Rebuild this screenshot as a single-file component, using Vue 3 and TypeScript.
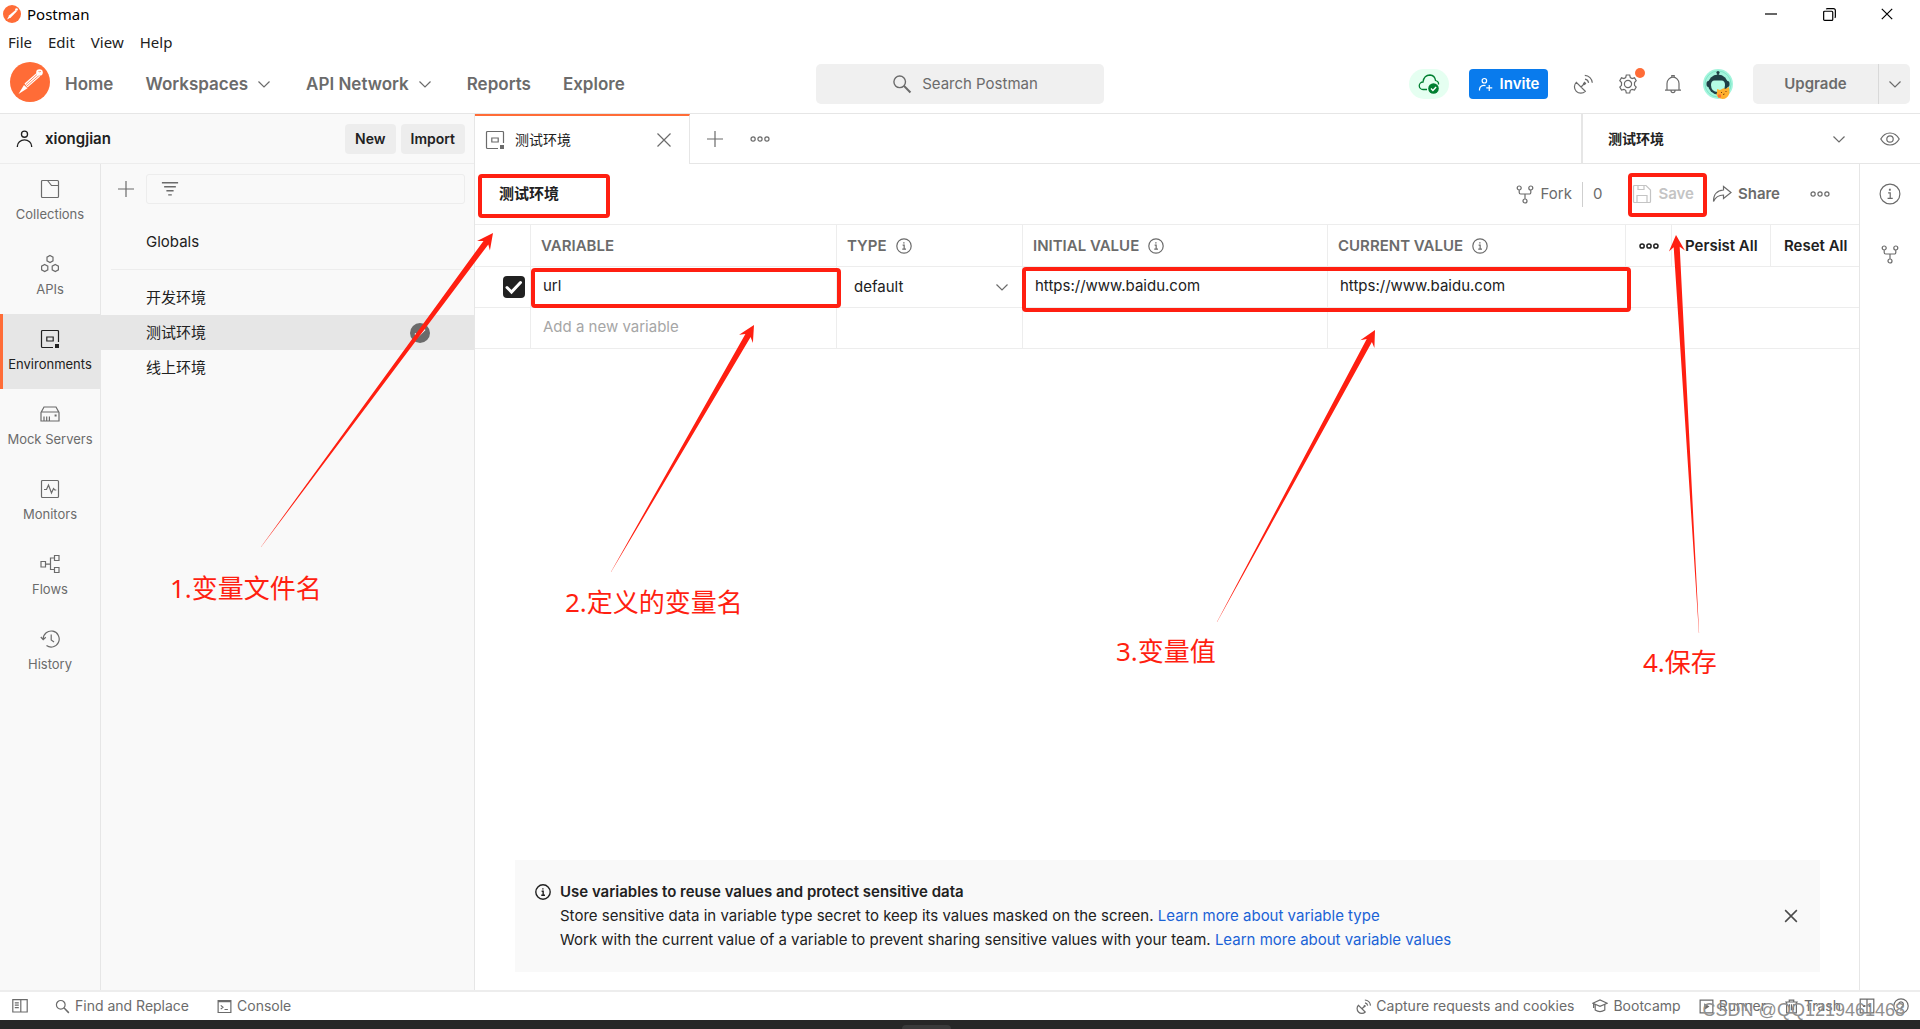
<script setup lang="ts">
import { h, ref } from 'vue'

interface Glyph {
  line?: string
  fill?: string
}

const glyphs: Record<string, Glyph> = {
  chevron: { line: 'M4.5 7.5 10 13l5.500-5.500' },
  close: { line: 'M3.500 3.500l13 13M16.500 3.500l-13 13' },
  plus: { line: 'M10 2v16M2 10h16' },
  dots: {
    line: 'M5.200 10a2.100 2.100 0 1 1-4.200 0a2.100 2.100 0 1 1 4.200 0zM12.100 10a2.100 2.100 0 1 1-4.200 0a2.100 2.100 0 1 1 4.200 0zM19 10a2.100 2.100 0 1 1-4.200 0a2.100 2.100 0 1 1 4.200 0z',
  },
  search: {
    line: 'M13.500 7.800a5.800 5.800 0 1 1-11.600 0a5.800 5.800 0 1 1 11.600 0z',
    fill: 'M11.200 12.400l1.300-1.300 6.700 6.600-1.500 1.500z',
  },
  user: {
    line: 'M13.200 5.500a3.200 3.200 0 1 1-6.400 0a3.200 3.200 0 1 1 6.400 0zM2.500 19v-1a7.500 6.500 0 0 1 15 0v1',
  },
  invite: {
    line: 'M11.500 5a3 3 0 1 1-6 0a3 3 0 1 1 6 0zM2 18v-1.500a6 5.500 0 0 1 8-5M15 10.500v8M11 14.500h8',
  },
  info: {
    line: 'M19 10a9 9 0 1 1-18 0a9 9 0 1 1 18 0zM8.300 9h1.900v5M7.800 14h4.700',
    fill: 'M9 5.200h1.700v1.800h-1.700z',
  },
  collections: {
    line: 'M2.500 1.500h15a1 1 0 0 1 1 1v15a1 1 0 0 1-1 1h-15a1 1 0 0 1-1-1v-15a1 1 0 0 1 1-1zM7.500 1.500l4 5h7',
  },
  apis: {
    line: 'M10 1.500l3 1.700v3.600l-3 1.700-3-1.700v-3.600zM4.700 10.500l3.100 1.700v3.600l-3.100 1.700-3.100-1.700v-3.600zM15.300 10.500l3.100 1.700v3.600l-3.100 1.700-3.100-1.700v-3.600z',
  },
  environments: {
    line: 'M18.500 13v-10.500a1 1 0 0 0-1-1h-15a1 1 0 0 0-1 1v15a1 1 0 0 0 1 1h10.500M6.800 8h6.400v4h-6.400z',
    fill: 'M15 15h4v4h-4z',
  },
  mock: {
    line: 'M1 8.500l3-5.500h12l3 5.500v8.500h-18zM1 8h18M4 17v-4.500M6.700 17v-4.500M9.400 17v-4.500',
    fill: 'M14.600 10.500h2v2h-2z',
  },
  monitors: {
    line: 'M2.500 1.500h15a1 1 0 0 1 1 1v15a1 1 0 0 1-1 1h-15a1 1 0 0 1-1-1v-15a1 1 0 0 1 1-1zM4 10.500h2.500l2-4.500 3 8 2-4.500 1.300 1.500h1.500',
  },
  flows: {
    line: 'M1 7.500h4.500v5.500h-4.500zM14.500 1.500h4.500v5h-4.500zM14.500 13.500h4.500v5h-4.500zM5.500 10.200h5M14.500 4h-4v11.500h4',
  },
  history: {
    line: 'M3.200 10a8 8 0 1 1 3.300 6.500M.8 8l2.400 2.600 2.600-2.300M11.200 5.500v5.500l2.800 2',
  },
  filter: { line: 'M1 3h18M3.500 7.500h13M6 12h8M8 16.500h4' },
  fork: {
    line: 'M6.200 4a2 2 0 1 1-4 0a2 2 0 1 1 4 0zM17.800 4a2 2 0 1 1-4 0a2 2 0 1 1 4 0zM12 17a2 2 0 1 1-4 0a2 2 0 1 1 4 0zM4.200 6v2.500a1.500 1.500 0 0 0 1.500 1.500h8.600a1.500 1.500 0 0 0 1.500-1.500v-2.500M10 10v5',
  },
  save: {
    line: 'M1.500 2.500a1 1 0 0 1 1-1h11.500l4.500 4.500v11.500a1 1 0 0 1-1 1h-15a1 1 0 0 1-1-1zM6 1.500v4h6v-4M5 18.500v-7h10v7',
  },
  share: {
    line: 'M11.500 2.500l7.500 6-7.500 6v-3.500c-5 0-8 2-10 6.500 0-7 3.500-11 10-11.500z',
  },
  eye: {
    line: 'M.8 10c4.500-8 13.900-8 18.400 0c-4.500 8-13.900 8-18.400 0zM13.200 10a3.200 3.200 0 1 1-6.400 0a3.200 3.200 0 1 1 6.400 0z',
  },
  bell: {
    line: 'M2 16.200h16M4 16v-6.500a6 6.300 0 0 1 12 0v6.500M8 16.500a2 2.200 0 0 0 4 0M8.800 3v-1.500h2.400v1.500',
  },
  satellite: {
    line: 'M3.300 8.300a6.300 6.300 0 1 0 9 9zM8 13l3.500-3.500M12 5.200a4.500 4.500 0 0 1 3.600 3.600M11.800 1.300a8 8 0 0 1 7.500 7.500',
    fill: 'M9.800 9.400l1.800-1.800 1.800 1.800-1.800 1.800z',
  },
  gear: {
    line: 'M8.300 1h3.400l.6 2.500 1.800 1 2.400-.7 1.700 2.900-1.700 1.800v2.800l1.700 1.800-1.700 2.900-2.400-.7-1.800 1-.6 2.700h-3.400l-.6-2.700-1.800-1-2.400.7-1.700-2.900 1.700-1.800v-2.800l-1.700-1.800 1.700-2.900 2.400.7 1.800-1zM13.600 10a3.600 3.600 0 1 1-7.200 0a3.600 3.600 0 1 1 7.200 0z',
  },
  panels: {
    line: 'M1 2h18v15.500h-18zM11 2v15.500M3.500 6h5M3.500 9h5M3.500 12h5',
  },
  console: {
    line: 'M1.500 2h17v16h-17zM1.500 3.500h17M5 8.500l3 2.500-3 2.500M10 14h4.500',
  },
  bootcamp: {
    line: 'M1 6.500l9-4 9 4-9 4zM4 8.500v6.500q6 4 12 0v-6.500M2 7.500v5',
  },
  runner: { line: 'M1.500 1.500h17v17h-17z', fill: 'M7 5.500l7 4.500-7 4.500z' },
  trash: {
    line: 'M1.500 4h17M7 4v-2.500h6v2.500M3.500 4v14.500h13v-14.500M7.300 7v8M10 7v8M12.700 7v8',
  },
  split: {
    line: 'M1.500 1.500h17v17h-17zM10 1.500v17',
    fill: 'M5 8.800h3v2.400h-3zM12 8.800h3v2.400h-3z',
  },
  help: {
    line: 'M19 10a9 9 0 1 1-18 0a9 9 0 1 1 18 0zM7 8a3 3 0 1 1 4.500 2.600q-1.500.8-1.500 2.400',
    fill: 'M9.200 14.200h1.600v1.600h-1.600z',
  },
  minimize: { line: 'M0 10h20' },
  restore: {
    line: 'M1 6.500a1.500 1.500 0 0 1 1.500-1.500h11a1.500 1.500 0 0 1 1.500 1.500v11a1.500 1.500 0 0 1-1.500 1.500h-11a1.500 1.500 0 0 1-1.500-1.500zM5 2q.5-1 2-1h9q3 0 3 3v9q0 1.500-1 2',
  },
}

const Icon = (props: { name: string; size?: number; weight?: number }) => {
  const size = props.size ?? 20
  const glyph = glyphs[props.name]
  return h('svg', { class: 'icon', width: size, height: size, viewBox: '0 0 20 20', 'aria-hidden': 'true' }, [
    glyph.line
      ? h('path', {
          d: glyph.line,
          fill: 'none',
          stroke: 'currentColor',
          'stroke-width': ((props.weight ?? 1.2) * 20) / size,
        })
      : null,
    glyph.fill ? h('path', { d: glyph.fill, fill: 'currentColor' }) : null,
  ])
}
Icon.props = ['name', 'size', 'weight']

const menus = ['File', 'Edit', 'View', 'Help']
const nav = [
  { label: 'Home', menu: false },
  { label: 'Workspaces', menu: true },
  { label: 'API Network', menu: true },
  { label: 'Reports', menu: false },
  { label: 'Explore', menu: false },
]
const sections = [
  { label: 'Collections', icon: 'collections' },
  { label: 'APIs', icon: 'apis' },
  { label: 'Environments', icon: 'environments' },
  { label: 'Mock Servers', icon: 'mock' },
  { label: 'Monitors', icon: 'monitors' },
  { label: 'Flows', icon: 'flows' },
  { label: 'History', icon: 'history' },
]
const activeSection = ref('Environments')

const environments = ['开发环境', '测试环境', '线上环境']
const selected = ref('测试环境')

const variable = ref({ enabled: true, name: 'url', type: 'default', initial: 'https://www.baidu.com', current: 'https://www.baidu.com' })

/* Annotation layer */
const boxes = [
  { x: 480, y: 176, w: 128, h: 40 },
  { x: 533, y: 270, w: 306, h: 36 },
  { x: 1024, y: 269, w: 605, h: 41 },
  { x: 1630, y: 175, w: 75, h: 40 },
]
const notes = [
  { text: '1.变量文件名', x: 170, y: 598 },
  { text: '2.定义的变量名', x: 565, y: 612 },
  { text: '3.变量值', x: 1116, y: 661 },
  { text: '4.保存', x: 1643, y: 672 },
]
const arrows = [
  { from: [261, 547], to: [493, 233] },
  { from: [611, 572], to: [754, 325] },
  { from: [1217, 622], to: [1375, 330] },
  { from: [1699, 633], to: [1676, 235] },
]

function arrowPoints(from: number[], to: number[]): string {
  const dx = to[0] - from[0]
  const dy = to[1] - from[1]
  const length = Math.hypot(dx, dy)
  const ux = dx / length
  const uy = dy / length
  const at = (back: number, side: number) =>
    `${(to[0] - ux * back - uy * side).toFixed(1)},${(to[1] - uy * back + ux * side).toFixed(1)}`
  return [at(0, 0), at(16, 8), at(12, 3), at(length, 0.1), at(length, -0.1), at(12, -3), at(16, -8)].join(' ')
}
</script>

<template>
  <div class="app">
    <div class="titlebar">
      <svg class="mini-logo" width="18" height="18" viewBox="0 0 40 40" aria-hidden="true">
        <circle cx="20" cy="20" r="20" fill="#ff6c37" />
        <path d="M9 32l5-9L28 11l3 3-13 13z" fill="#fff" />
        <circle cx="30" cy="10" r="3" fill="#fff" />
      </svg>
      <span class="app-name">Postman</span>
      <div class="window-controls">
        <button type="button" aria-label="Minimize"><Icon name="minimize" :size="12" /></button>
        <button type="button" aria-label="Restore"><Icon name="restore" :size="13" /></button>
        <button type="button" aria-label="Close window"><Icon name="close" :size="16" /></button>
      </div>
    </div>

    <div class="menubar">
      <button v-for="m in menus" :key="m" type="button">{{ m }}</button>
    </div>

    <header class="header">
      <div class="header-left">
        <svg class="logo" width="40" height="40" viewBox="0 0 40 40" role="img" aria-label="Postman logo">
          <circle cx="20" cy="20" r="20" fill="#ff6c37" />
          <path d="M14.500 21.500 26.500 11l3.500 3.500L17.500 25.500z" fill="#fff" />
          <path d="M8.500 32l5.500-9 3.500 3.200z" fill="#fff" />
          <path d="M16 22.500l11-10M17 24l12-10.500" stroke="#ff6c37" stroke-width=".8" />
          <circle cx="29.500" cy="10.500" r="3.300" fill="#fff" />
          <path d="M28.500 9.500q2 1 2.500-.5" fill="none" stroke="#ff6c37" stroke-width=".7" />
        </svg>
        <nav class="nav">
          <a v-for="n in nav" :key="n.label" href="#">{{ n.label }}<Icon v-if="n.menu" name="chevron" :size="20" /></a>
        </nav>
      </div>
      <button class="search" type="button"><Icon name="search" :size="20" :weight="1.400" />Search Postman</button>
      <div class="header-right">
        <span class="sync">
          <svg width="22" height="22" viewBox="0 0 22 22" aria-hidden="true">
            <path d="M9 16.500H5A3.700 3.700 0 0 1 5 9Q6 2 12 2q5 .5 5.500 5.500Q21 8.500 20.500 11.500" fill="none" stroke="#007f31" stroke-width="1.300" />
            <circle cx="15.500" cy="15.500" r="5.300" fill="#007f31" />
            <path d="M13 15.500l1.900 1.900 3.200-3.400" fill="none" stroke="#fff" stroke-width="1.400" />
          </svg>
        </span>
        <button class="invite" type="button"><Icon name="invite" :size="15" />Invite</button>
        <button class="plain" type="button" aria-label="Capture"><Icon name="satellite" /></button>
        <button class="plain settings" type="button" aria-label="Settings"><Icon name="gear" /><span class="badge"></span></button>
        <button class="plain" type="button" aria-label="Notifications"><Icon name="bell" /></button>
        <svg class="avatar" width="30" height="30" viewBox="0 0 30 30" role="img" aria-label="Account">
          <circle cx="15" cy="15" r="15" fill="#a4f5dd" />
          <circle cx="15" cy="15" r="13" fill="none" stroke="#7fe6c8" />
          <path d="M15 3v5" stroke="#1f3f45" stroke-width="1.500" />
          <circle cx="15" cy="3.500" r="1.600" fill="#1f3f45" />
          <rect x="3.500" y="12" width="23" height="6" rx="2" fill="#1f3f45" />
          <circle cx="15" cy="15.500" r="10" fill="#1f3f45" />
          <path d="M8 16q0-4.500 3.500-4.500h7q3.500 0 3.500 4.500 0 7-7 7t-7-7z" fill="#b4fbe5" />
          <path d="M14 20l3 1 4-2 1 1 4-2 .5 6q-2 6-7 6-6-1-6-5 1-2 .5-5z" fill="#ffb02e" />
          <path d="M18 23.500h1M22.500 22.500h1M20 25.500l1.500-.5M15 27h3" stroke="#7a3b10" />
          <path d="M15 25.500h3v3h-3z" fill="#ff6c37" />
        </svg>
        <div class="upgrade">
          <button type="button">Upgrade</button>
          <button type="button" aria-label="Upgrade options"><Icon name="chevron" :size="20" /></button>
        </div>
      </div>
    </header>

    <div class="body">
      <aside class="sidebar">
        <div class="workspace">
          <Icon name="user" :size="19" :weight="1.300" />
          <strong>xiongjian</strong>
          <button type="button">New</button>
          <button type="button">Import</button>
        </div>
        <div class="sidebar-body">
          <nav class="sections">
            <button
              v-for="s in sections"
              :key="s.label"
              type="button"
              :class="{ active: s.label === activeSection }"
              @click="activeSection = s.label"
            >
              <Icon :name="s.icon" />
              <span>{{ s.label }}</span>
            </button>
          </nav>
          <div class="list">
            <div class="list-tools">
              <button class="plain" type="button" aria-label="Create environment"><Icon name="plus" /></button>
              <label class="filter"><Icon name="filter" :size="18" :weight="1.400" /><input type="text" aria-label="Filter environments" /></label>
            </div>
            <button class="entry globals" type="button">Globals</button>
            <hr />
            <button
              v-for="e in environments"
              :key="e"
              class="entry"
              :class="{ current: e === selected }"
              type="button"
              @click="selected = e"
            >
              {{ e }}
              <svg v-if="e === selected" width="20" height="20" viewBox="0 0 20 20" aria-hidden="true">
                <circle cx="10" cy="10" r="10" fill="#6b6b6b" />
                <path d="M5 10.500l3 3 7-7" fill="none" stroke="#fff" stroke-width="1.500" />
              </svg>
            </button>
          </div>
        </div>
      </aside>

      <main class="main">
        <div class="tabs">
          <div class="tab">
            <Icon name="environments" />
            <span>测试环境</span>
            <button class="plain" type="button" aria-label="Close tab"><Icon name="close" /></button>
          </div>
          <div class="tab-tools">
            <button class="plain" type="button" aria-label="New tab"><Icon name="plus" /></button>
            <button class="plain" type="button" aria-label="Tab options"><Icon name="dots" /></button>
          </div>
          <div class="env-picker">
            <label class="select-wrap">
              <select v-model="selected" aria-label="Active environment">
                <option v-for="e in environments" :key="e">{{ e }}</option>
              </select>
              <Icon name="chevron" :size="20" />
            </label>
            <button class="plain" type="button" aria-label="Environment quick look"><Icon name="eye" /></button>
          </div>
        </div>

        <div class="workbench">
          <section class="editor">
            <div class="toolbar">
              <h1>测试环境</h1>
              <button class="fork" type="button"><Icon name="fork" />Fork</button>
              <span class="count">0</span>
              <button class="save" type="button" disabled><Icon name="save" />Save</button>
              <button class="share" type="button"><Icon name="share" />Share</button>
              <button class="plain more" type="button" aria-label="More actions"><Icon name="dots" /></button>
            </div>

            <table>
              <colgroup>
                <col class="c-check" />
                <col class="c-name" />
                <col class="c-type" />
                <col class="c-initial" />
                <col />
                <col class="c-more" />
                <col class="c-persist" />
                <col class="c-reset" />
              </colgroup>
              <thead>
                <tr>
                  <th aria-label="Enabled"></th>
                  <th>VARIABLE</th>
                  <th><span class="head">TYPE<Icon name="info" :size="16" /></span></th>
                  <th><span class="head">INITIAL VALUE<Icon name="info" :size="16" /></span></th>
                  <th><span class="head">CURRENT VALUE<Icon name="info" :size="16" /></span></th>
                  <th class="action"><button class="dark" type="button" aria-label="Column options"><Icon name="dots" :weight="1.500" /></button></th>
                  <th class="action"><button class="dark" type="button">Persist All</button></th>
                  <th class="action"><button class="dark" type="button">Reset All</button></th>
                </tr>
              </thead>
              <tbody>
                <tr>
                  <td class="check"><input v-model="variable.enabled" type="checkbox" aria-label="Enable url" /></td>
                  <td><input v-model="variable.name" type="text" aria-label="Variable" /></td>
                  <td>
                    <label class="select-wrap">
                      <select v-model="variable.type" aria-label="Type">
                        <option>default</option>
                        <option>secret</option>
                      </select>
                      <Icon name="chevron" :size="20" />
                    </label>
                  </td>
                  <td><input v-model="variable.initial" type="text" aria-label="Initial value" /></td>
                  <td colspan="4"><input v-model="variable.current" type="text" aria-label="Current value" /></td>
                </tr>
                <tr>
                  <td></td>
                  <td><input type="text" placeholder="Add a new variable" aria-label="New variable" /></td>
                  <td></td>
                  <td></td>
                  <td colspan="4"></td>
                </tr>
              </tbody>
            </table>

            <div class="callout">
              <Icon name="info" :size="16" :weight="1.400" />
              <div class="callout-text">
                <strong>Use variables to reuse values and protect sensitive data</strong>
                <p>Store sensitive data in variable type secret to keep its values masked on the screen. <a href="#">Learn more about variable type</a></p>
                <p>Work with the current value of a variable to prevent sharing sensitive values with your team. <a href="#">Learn more about variable values</a></p>
              </div>
              <button class="plain" type="button" aria-label="Dismiss"><Icon name="close" :size="18" :weight="1.500" /></button>
            </div>
          </section>

          <aside class="rail">
            <button class="plain" type="button" aria-label="Details"><Icon name="info" :size="22" /></button>
            <button class="plain" type="button" aria-label="Forks"><Icon name="fork" /></button>
          </aside>
        </div>
      </main>
    </div>

    <footer class="footer">
      <button type="button" aria-label="Toggle sidebar"><Icon name="panels" :size="16" /></button>
      <button class="find" type="button"><Icon name="search" :size="15" />Find and Replace</button>
      <button class="console" type="button"><Icon name="console" :size="15" />Console</button>
      <div class="footer-right">
        <button type="button"><Icon name="satellite" :size="15" />Capture requests and cookies</button>
        <button type="button"><Icon name="bootcamp" :size="16" />Bootcamp</button>
        <button type="button"><Icon name="runner" :size="15" />Runner</button>
        <button type="button"><Icon name="trash" :size="15" />Trash</button>
        <button type="button" aria-label="Two pane view"><Icon name="split" :size="16" /></button>
        <button type="button" aria-label="Help"><Icon name="help" :size="16" /></button>
      </div>
      <span class="watermark">CSDN @QQ1219461468</span>
    </footer>
    <div class="taskbar"><span></span></div>

    <svg class="annotations" width="100%" height="100%" aria-hidden="true">
      <rect v-for="b in boxes" :key="b.x" :x="b.x" :y="b.y" :width="b.w" :height="b.h" rx="2" />
      <polygon v-for="a in arrows" :key="a.to[0]" :points="arrowPoints(a.from, a.to)" />
      <text v-for="n in notes" :key="n.text" :x="n.x" :y="n.y">{{ n.text }}</text>
    </svg>
  </div>
</template>

<style>
body {
  margin: 0;
}
</style>

<style scoped>
* {
  box-sizing: border-box;
}

.app {
  position: relative;
  display: flex;
  flex-direction: column;
  min-height: 100vh;
  background: #fff;
  color: #212121;
  font: 15px/24px Inter, "Noto Sans CJK SC", sans-serif;
}

button,
input,
select {
  margin: 0;
  padding: 0;
  border: 0;
  background: none;
  color: inherit;
  font: inherit;
}

a {
  color: inherit;
  text-decoration: none;
}

.icon {
  flex: none;
  display: block;
}

.plain {
  display: flex;
  color: #6b6b6b;
}

/* Window frame */
.titlebar {
  display: flex;
  align-items: center;
  height: 28px;
  padding: 0 4px 0 3px;
  color: #000;
  font-family: "Noto Sans", sans-serif;
}

.app-name {
  margin-left: 6px;
}

.window-controls {
  display: flex;
  align-items: center;
  margin-left: auto;
}

.window-controls button {
  display: flex;
  justify-content: center;
  width: 58px;
}

.menubar {
  display: flex;
  gap: 16px;
  height: 27px;
  padding: 2px 8px;
  font-family: "Noto Sans", sans-serif;
}

/* Header */
.header {
  display: flex;
  align-items: center;
  height: 59px;
  padding: 0 10px;
  border-bottom: 1px solid #e6e6e6;
  color: #6b6b6b;
}

.header-left,
.header-right {
  display: flex;
  flex: 1;
  align-items: center;
}

.header-right {
  justify-content: flex-end;
}

.logo {
  margin-bottom: 4px;
}

.nav {
  display: flex;
  gap: 32px;
  margin-left: 15px;
  font-size: 17px;
  font-weight: 600;
}

.nav a {
  display: flex;
  align-items: center;
  gap: 6px;
}

.search {
  display: flex;
  align-items: center;
  justify-content: center;
  gap: 10px;
  width: 288px;
  height: 40px;
  padding-left: 10px;
  border-radius: 5px;
  background: #f0f0f0;
}

.sync {
  display: flex;
  align-items: center;
  justify-content: center;
  width: 40px;
  height: 30px;
  border-radius: 15px;
  background: #e5fff1;
}

.invite {
  display: flex;
  align-items: center;
  justify-content: center;
  gap: 7px;
  width: 79px;
  height: 30px;
  margin: 0 25px 0 20px;
  border-radius: 4px;
  background: #097bed;
  color: #fff;
  font-weight: 600;
}

.header-right .plain {
  margin-right: 25px;
}

.settings {
  position: relative;
}

.badge {
  position: absolute;
  top: -6px;
  right: -7px;
  width: 10px;
  height: 10px;
  border-radius: 50%;
  background: #ff6c37;
}

.avatar {
  margin-left: -5px;
}

.upgrade {
  display: flex;
  height: 40px;
  margin-left: 20px;
  border-radius: 5px;
  background: #f0f0f0;
  font-weight: 600;
}

.upgrade button {
  width: 125px;
}

.upgrade button:last-child {
  display: flex;
  align-items: center;
  justify-content: center;
  width: 32px;
  border-left: 1px solid #d9d9d9;
}

/* Sidebar */
.body {
  display: flex;
  flex: 1;
}

.sidebar {
  display: flex;
  flex: none;
  flex-direction: column;
  width: 475px;
  border-right: 1px solid #e6e6e6;
  background: #f9f9f9;
}

.workspace {
  display: flex;
  align-items: center;
  gap: 5px;
  height: 50px;
  padding: 0 9px 0 15px;
  border-bottom: 1px solid #ededed;
}

.workspace strong {
  flex: 1;
  margin-left: 6px;
  font-weight: 600;
}

.workspace button {
  height: 30px;
  padding: 0 10px;
  border-radius: 4px;
  background: #ededed;
  font-size: 14px;
  font-weight: 600;
}

.sidebar-body {
  display: flex;
  flex: 1;
}

.sections {
  display: flex;
  flex-direction: column;
  width: 101px;
  border-right: 1px solid #e6e6e6;
}

.sections button {
  display: flex;
  flex-direction: column;
  align-items: center;
  gap: 5px;
  height: 75px;
  padding-top: 15px;
  color: #6b6b6b;
  font-size: 13px;
  line-height: 20px;
}

.sections .active {
  background: #e6e6e6;
  box-shadow: inset 3px 0 #ff6c37;
  color: #212121;
}

.list {
  display: flex;
  flex: 1;
  flex-direction: column;
}

.list-tools {
  display: flex;
  align-items: center;
  gap: 10px;
  padding: 10px 9px 10px 15px;
}

.filter {
  display: flex;
  flex: 1;
  align-items: center;
  height: 30px;
  padding: 0 14px;
  border: 1px solid #ededed;
  border-radius: 3px;
  color: #6b6b6b;
}

.filter input {
  flex: 1;
  outline: none;
}

.list hr {
  width: calc(100% - 10px);
  margin: 10px 0 10px 10px;
  border: 0;
  border-top: 1px solid #ededed;
}

.entry {
  display: flex;
  align-items: center;
  justify-content: space-between;
  height: 35px;
  padding: 0 44px 0 45px;
}

.globals {
  margin-top: 10px;
}

.current {
  background: #e6e6e6;
}

/* Main area */
.main {
  display: flex;
  flex: 1;
  flex-direction: column;
  min-width: 0;
}

.tabs {
  display: flex;
  height: 50px;
}

.tab {
  display: flex;
  align-items: center;
  gap: 10px;
  width: 215px;
  padding: 0 15px 0 10px;
  border-top: 2px solid #ff6c37;
  border-right: 1px solid #e6e6e6;
  color: #6b6b6b;
  font-size: 14px;
}

.tab span {
  flex: 1;
  color: #212121;
}

.tab-tools {
  display: flex;
  flex: 1;
  align-items: center;
  gap: 25px;
  padding: 0 15px;
  border-bottom: 1px solid #e6e6e6;
}

.env-picker {
  display: flex;
  align-items: center;
  width: 339px;
  padding: 0 20px 0 25px;
  border-bottom: 1px solid #e6e6e6;
  border-left: 2px solid #e6e6e6;
}

.env-picker .select-wrap {
  margin-right: 31px;
  font-size: 14px;
  font-weight: 600;
}

.select-wrap {
  display: flex;
  flex: 1;
  align-items: center;
}

.select-wrap select {
  flex: 1;
  appearance: none;
  outline: none;
}

.select-wrap .icon {
  color: #6b6b6b;
}

.workbench {
  display: flex;
  flex: 1;
}

.editor {
  display: flex;
  flex: 1;
  flex-direction: column;
  min-width: 0;
}

.rail {
  display: flex;
  flex-direction: column;
  align-items: center;
  gap: 39px;
  width: 61px;
  padding-top: 19px;
  border-left: 1px solid #e6e6e6;
}

.toolbar {
  display: flex;
  align-items: center;
  height: 60px;
  padding: 0 29px 0 24px;
  color: #6b6b6b;
}

.toolbar h1 {
  flex: 1;
  margin: 0;
  color: #212121;
  font-size: 15px;
  font-weight: 600;
}

.toolbar button {
  display: flex;
  align-items: center;
  gap: 6px;
}

.fork {
  height: 25px;
  padding-right: 10px;
  border-right: 1px solid #cfcfcf;
}

.count {
  margin: 0 30px 0 10px;
}

.save {
  color: #c4c4c4;
  font-weight: 600;
}

.share {
  margin-left: 18px;
  font-weight: 600;
}

.more {
  margin-left: 30px;
}

table {
  width: 100%;
  border-collapse: separate;
  border-spacing: 0;
  border-top: 1px solid #ededed;
  table-layout: fixed;
}

.c-check {
  width: 56px;
}

.c-name {
  width: 306px;
}

.c-type {
  width: 186px;
}

.c-initial {
  width: 305px;
}

.c-more {
  width: 46px;
}

.c-persist {
  width: 99px;
}

.c-reset {
  width: 88px;
}

th,
td {
  height: 41px;
  padding: 0 10px 0 12px;
  border-right: 1px solid #ededed;
  border-bottom: 1px solid #ededed;
  text-align: left;
}

th {
  height: 42px;
  padding: 0 10px;
  color: #6b6b6b;
  font-weight: 600;
}

th.action {
  padding: 0 0 0 13px;
}

th:last-child,
td:last-child {
  border-right: 0;
}

.head {
  display: flex;
  align-items: center;
  gap: 9px;
}

.dark {
  display: block;
  color: #212121;
  font-weight: 600;
}

td input[type="text"] {
  display: block;
  width: 100%;
  padding-bottom: 2px;
  outline: none;
}

td input::placeholder {
  color: #a6a6a6;
  opacity: 1;
}

td .select-wrap {
  padding-left: 5px;
}

td.check {
  padding: 0 5px;
}

td input[type="checkbox"] {
  display: block;
  width: 22px;
  height: 22px;
  margin-left: auto;
  border-radius: 4px;
  appearance: none;
}

td input[type="checkbox"]:checked {
  background: #212121 url("data:image/svg+xml,%3Csvg xmlns='http://www.w3.org/2000/svg' viewBox='0 0 22 22'%3E%3Cpath d='M4 11.500l4.500 4.500 9-9.500' fill='none' stroke='white' stroke-width='3' stroke-linecap='round'/%3E%3C/svg%3E");
}

.callout {
  display: flex;
  gap: 9px;
  margin: auto 39px 18px 40px;
  padding: 20px;
  background: #f9f9f9;
}

.callout > .icon {
  margin-top: 4px;
}

.callout-text {
  flex: 1;
}

.callout strong {
  display: block;
  font-weight: 600;
}

.callout p {
  margin: 0;
}

.callout a {
  color: #1a62d6;
}

.callout .plain {
  align-self: center;
  color: #4a4a4a;
}

/* Footer */
.footer {
  position: relative;
  display: flex;
  align-items: center;
  height: 30px;
  padding: 0 11px 0 12px;
  border-top: 2px solid #ededed;
  color: #6b6b6b;
  font-size: 14px;
}

.footer button {
  display: flex;
  align-items: center;
  gap: 5px;
}

.footer .find {
  margin: 0 28px 0 27px;
}

.footer-right {
  display: flex;
  gap: 18px;
  margin-left: auto;
}

.watermark {
  position: absolute;
  right: 15px;
  bottom: -2px;
  color: #8f8f8f;
  font: 18px/24px "Liberation Sans", sans-serif;
}

.taskbar {
  display: flex;
  align-items: flex-end;
  justify-content: center;
  height: 9px;
  background: #272727;
}

.taskbar span {
  width: 49px;
  height: 4px;
  margin-right: 67px;
  border-radius: 4px 4px 0 0;
  background: #3a3a3a;
}

/* Annotations over the window */
.annotations {
  position: absolute;
  top: 0;
  left: 0;
  overflow: hidden;
  pointer-events: none;
}

.annotations rect {
  fill: none;
  stroke: #ff1f11;
  stroke-width: 4px;
}

.annotations polygon {
  fill: #ff1f11;
}

.annotations text {
  fill: #ff1f11;
  font: 26px "Noto Sans", "Noto Sans CJK SC", sans-serif;
}
</style>
